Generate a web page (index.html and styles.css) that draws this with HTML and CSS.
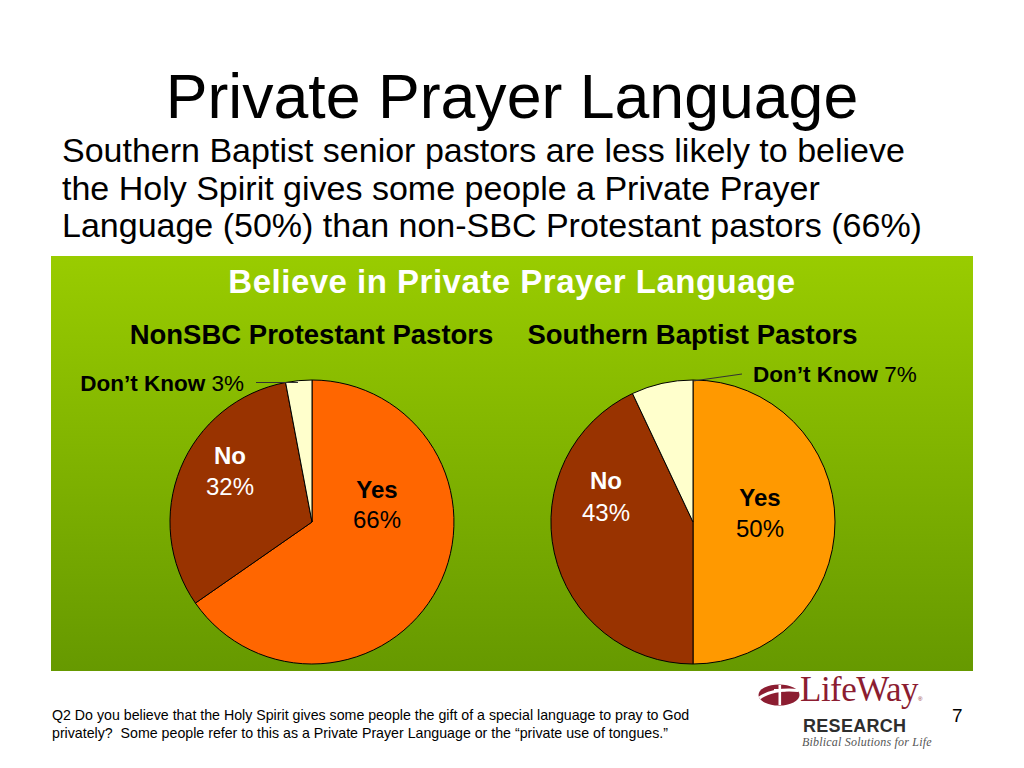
FILE: index.html
```html
<!DOCTYPE html>
<html>
<head>
<meta charset="utf-8">
<link rel="stylesheet" href="styles.css">
</head>
<body>
<h1 class="title">Private Prayer Language</h1>
<p class="lead">Southern Baptist senior pastors are less likely to believe<br>the Holy Spirit gives some people a Private Prayer<br>Language (50%) than non-SBC Protestant pastors (66%)</p>

<section class="panel">
  <h2 class="panel-title">Believe in Private Prayer Language</h2>
  <div class="charts">
    <div class="col">
      <h3 class="col-title">NonSBC Protestant Pastors</h3>
      <svg class="pie" width="381" height="318" viewBox="0 0 381 318">
        <path class="s-yes1" d="M191,171 L191,29 A142,142 0 1 1 74.4,252.1 Z"/>
        <path class="s-no" d="M191,171 L74.4,252.1 A142,142 0 0 1 164.6,31.5 Z"/>
        <path class="s-dk" d="M191,171 L164.6,31.5 A142,142 0 0 1 191,29 Z"/>
        <line class="leader" x1="135" y1="31.5" x2="177" y2="31.5"/>
        <text class="dk-label" x="123" y="40" text-anchor="end"><tspan class="b">Don’t Know</tspan> 3%</text>
        <text class="lbl light" x="109" y="113" text-anchor="middle"><tspan class="b">No</tspan></text>
        <text class="lbl light" x="109" y="144" text-anchor="middle">32%</text>
        <text class="lbl" x="256" y="147" text-anchor="middle"><tspan class="b">Yes</tspan></text>
        <text class="lbl" x="256" y="177" text-anchor="middle">66%</text>
      </svg>
    </div>
    <div class="col">
      <h3 class="col-title">Southern Baptist Pastors</h3>
      <svg class="pie" width="381" height="318" viewBox="0 0 381 318">
        <path class="s-yes2" d="M191,171 L191,29 A142,142 0 1 1 191,313 Z"/>
        <path class="s-no" d="M191,171 L191,313 A142,142 0 0 1 130.5,42.5 Z"/>
        <path class="s-dk" d="M191,171 L130.5,42.5 A142,142 0 0 1 191,29 Z"/>
        <line class="leader" x1="191" y1="30" x2="240" y2="23"/>
        <text class="dk-label" x="251" y="31"><tspan class="b">Don’t Know</tspan> 7%</text>
        <text class="lbl light" x="104" y="138" text-anchor="middle"><tspan class="b">No</tspan></text>
        <text class="lbl light" x="104" y="170" text-anchor="middle">43%</text>
        <text class="lbl" x="258" y="155" text-anchor="middle"><tspan class="b">Yes</tspan></text>
        <text class="lbl" x="258" y="186" text-anchor="middle">50%</text>
      </svg>
    </div>
  </div>
</section>

<footer class="footer">
  <p class="note">Q2 Do you believe that the Holy Spirit gives some people the gift of a special language to pray to God<br>privately?&nbsp; Some people refer to this as a Private Prayer Language or the “private use of tongues.”</p>
  <div class="logo">
    <div class="logo-row">
      <svg class="logo-icon" width="42" height="22" viewBox="0 0 42 22">
        <ellipse cx="21" cy="11" rx="20.5" ry="10.5" fill="#8c1d31"/>
        <path d="M1.5 14 C 9 8, 24 4.5, 40.5 6.5" stroke="#fff" stroke-width="3" fill="none"/>
        <rect x="20.5" y="1" width="2.6" height="20" fill="#fff"/>
        <rect x="16" y="5" width="11.5" height="2.4" fill="#fff"/>
      </svg>
      <span class="logo-word">LifeWay<sup class="reg">®</sup></span>
    </div>
    <div class="logo-research">RESEARCH</div>
    <div class="logo-tag">Biblical Solutions for Life</div>
  </div>
  <div class="page-num">7</div>
</footer>
</body>
</html>
```

FILE: styles.css
```css
html, body {
  margin: 0;
  padding: 0;
}
body {
  width: 1024px;
  height: 768px;
  overflow: hidden;
  background: #ffffff;
  color: #000000;
  font-family: "Liberation Sans", Arial, sans-serif;
}
.title {
  margin: 60px 0 0;
  font-size: 62.6px;
  font-weight: normal;
  line-height: 72px;
  text-align: center;
}
.lead {
  margin: 0;
  padding-left: 62px;
  font-size: 34px;
  line-height: 37.5px;
  white-space: nowrap;
}
.panel {
  box-sizing: border-box;
  margin: 11px 0 0 51px;
  width: 922px;
  height: 415px;
  padding-top: 6px;
  background: linear-gradient(to bottom, #99cc00 0%, #669900 100%);
}
.panel-title {
  margin: 0;
  font-size: 33px;
  letter-spacing: 0.5px;
  line-height: 40px;
  font-weight: bold;
  color: #ffffff;
  text-align: center;
}
.charts {
  display: flex;
  padding-left: 70px;
  margin-top: 17.5px;
}
.col {
  width: 381px;
  display: flex;
  flex-direction: column;
  align-items: center;
}
.col-title {
  margin: 0;
  font-size: 27.5px;
  line-height: 32px;
  font-weight: bold;
  white-space: nowrap;
}
.pie {
  display: block;
  overflow: visible;
}
.pie path {
  stroke: #000000;
  stroke-width: 1;
  stroke-linejoin: round;
}
.s-yes1 { fill: #ff6600; }
.s-yes2 { fill: #ff9900; }
.s-no { fill: #993300; }
.s-dk { fill: #ffffcc; }
.leader {
  stroke: #333333;
  stroke-width: 1.2;
}
.dk-label {
  font-family: "Liberation Sans", Arial, sans-serif;
  font-size: 22.5px;
  fill: #000000;
}
.lbl {
  font-family: "Liberation Sans", Arial, sans-serif;
  font-size: 24px;
  fill: #000000;
}
.lbl.light { fill: #ffffff; }
.b { font-weight: bold; }

.footer {
  display: flex;
  align-items: flex-start;
  margin-top: 9px;
}
.note {
  margin: 26px 0 0 52px;
  width: 706px;
  font-size: 14.2px;
  line-height: 18px;
  white-space: nowrap;
}
.logo {
  width: 170px;
  display: flex;
  flex-direction: column;
}
.logo-row {
  display: flex;
  align-items: center;
  height: 30px;
}
.logo-icon {
  display: block;
  flex: none;
}
.logo-word {
  font-family: "Liberation Serif", "Times New Roman", serif;
  font-size: 35px;
  line-height: 30px;
  color: #8c1d31;
  letter-spacing: -0.5px;
  white-space: nowrap;
}
.reg {
  font-family: "Liberation Sans", Arial, sans-serif;
  font-size: 6px;
  vertical-align: 0;
  color: #8c1d31;
}
.logo-research {
  margin: 7px 0 0 45px;
  font-size: 18px;
  line-height: 18px;
  font-weight: bold;
  letter-spacing: 0.3px;
  color: #2e2e2e;
  white-space: nowrap;
}
.logo-tag {
  margin-left: 44px;
  font-family: "Liberation Serif", "Times New Roman", serif;
  font-style: italic;
  font-size: 12px;
  letter-spacing: 0.2px;
  line-height: 14px;
  color: #555555;
  white-space: nowrap;
}
.page-num {
  margin: 25px 0 0 24px;
  font-size: 19px;
  line-height: 22px;
}
```
